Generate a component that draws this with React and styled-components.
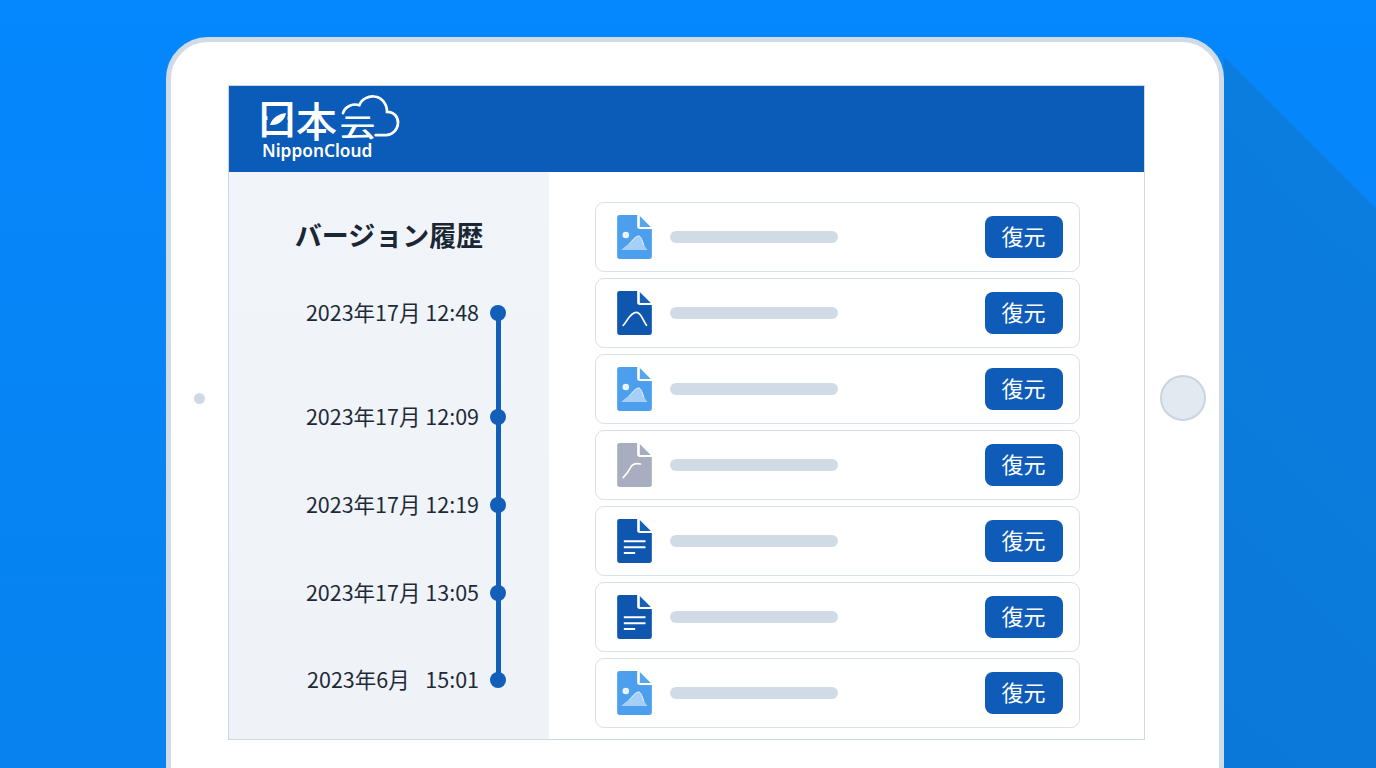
import React from "react";
import styled, { createGlobalStyle } from "styled-components";

const GlobalStyle = createGlobalStyle`
  html, body {
    margin: 0;
    padding: 0;
    overflow: hidden;
    font-family: "Noto Sans CJK JP", "Noto Sans", sans-serif;
  }
`;

const Stage = styled.div`
  width: 1376px;
  height: 768px;
  overflow: hidden;
  box-sizing: border-box;
  padding: 37px 152px 0 166px;
  background:
    linear-gradient(45deg, #0a78d8 0, #0b7ddf 503px, transparent 503px) right top / 152px 100% no-repeat,
    linear-gradient(180deg, #0587fd, #0782ee);
`;

const Tablet = styled.div`
  display: flex;
  width: 1058px;
  height: 770px;
  box-sizing: border-box;
  background: #fff;
  border: 5px solid #cfdbe6;
  border-radius: 42px;
  padding-top: 43px;
`;

const Bezel = styled.div`
  flex: none;
  width: ${({ $w }) => $w}px;
  height: 740px;
  display: flex;
  justify-content: center;
  align-items: center;
  box-sizing: border-box;
  padding-bottom: 114px;
`;

const Camera = styled.div`
  width: 11px;
  height: 11px;
  border-radius: 50%;
  background: #cfd9e4;
`;

const HomeButton = styled.div`
  width: 46px;
  height: 46px;
  margin-left: 2px;
  box-sizing: border-box;
  border-radius: 50%;
  background: #e3e9f1;
  border: 2px solid #c9d5e1;
`;

const Screen = styled.div`
  flex: none;
  width: 917px;
  height: 655px;
  box-sizing: border-box;
  border: 1.5px solid #cdd8e3;
  display: flex;
  flex-direction: column;
`;

const Header = styled.header`
  flex: none;
  height: 86px;
  background: #0b5bb8;
  box-sizing: border-box;
  padding: 10px 0 0 33px;
`;

const Logo = styled.div`
  position: relative;
  width: 140px;
  color: #fff;
`;

const LogoMark = styled.div`
  display: flex;
  align-items: flex-end;
  height: 44px;
  font-weight: 500;
`;

const Glyph = styled.span`
  display: block;
  flex: none;
  font-size: ${({ $size }) => $size}px;
  line-height: 1;
  margin-left: ${({ $ml }) => $ml}px;
  transform: translateY(${({ $dy }) => $dy}px) scale(${({ $sx }) => $sx}, ${({ $sy }) => $sy});
  transform-origin: center bottom;
`;

const LogoName = styled.div`
  font-family: "Noto Sans", sans-serif;
  font-size: 17.3px;
  font-weight: 600;
  line-height: 20px;
  margin-top: 1px;
`;

const LeafSvg = styled.svg`
  position: absolute;
  left: 0;
  top: 6px;
  width: 32px;
  height: 34px;
`;

const CloudSvg = styled.svg`
  position: absolute;
  left: 79px;
  top: -3px;
  width: 60px;
  height: 47px;
`;

const Body = styled.div`
  flex: 1;
  display: flex;
  min-height: 0;
`;

const Sidebar = styled.aside`
  flex: none;
  width: 320px;
  box-sizing: border-box;
  padding-top: 43px;
  background: linear-gradient(180deg, #f1f5f9, #eff3f8);
`;

const Title = styled.h1`
  margin: 0;
  font-size: 27px;
  line-height: 40px;
  font-weight: 700;
  text-align: center;
  color: #1b2735;
`;

const Timeline = styled.ol`
  position: relative;
  list-style: none;
  margin: 43px 0 0;
  padding: 0;

  &::before {
    content: "";
    position: absolute;
    top: 15px;
    bottom: 15px;
    right: 48.5px;
    width: 5px;
    background: #125fb9;
  }
`;

const TimeRow = styled.li`
  display: flex;
  align-items: center;
  justify-content: flex-end;
  gap: 11px;
  height: 30px;
  padding-right: 43px;
  margin-top: ${({ $gap }) => $gap}px;
`;

const TimeText = styled.span`
  font-size: 21.5px;
  line-height: 30px;
  margin-bottom: 3px;
  color: #1f2a38;
  white-space: pre;
`;

const Dot = styled.span`
  position: relative;
  flex: none;
  width: 16px;
  height: 16px;
  border-radius: 50%;
  background: #125fb9;
`;

const Main = styled.main`
  flex: 1;
  background: #fff;
  box-sizing: border-box;
  padding: 29.5px 0 0 46px;
  display: flex;
  flex-direction: column;
  gap: 6px;
`;

const FileRow = styled.div`
  width: 485px;
  height: 70px;
  flex: none;
  box-sizing: border-box;
  display: flex;
  align-items: center;
  padding: 0 16px 0 20.5px;
  background: #fff;
  border: 1.5px solid #d9e0e8;
  border-radius: 9px;
`;

const IconSvg = styled.svg`
  flex: none;
  width: 35px;
  height: 44px;
`;

const NameBar = styled.div`
  width: 168px;
  height: 12px;
  margin-left: 18px;
  border-radius: 6px;
  background: #d1dbe5;
`;

const RestoreButton = styled.button`
  margin-left: auto;
  width: 78px;
  height: 42px;
  border: 0;
  padding: 0 1px 3px 0;
  border-radius: 8px;
  background: #0f5cb8;
  color: #fff;
  font-family: inherit;
  font-size: 22px;
  font-weight: 400;
`;

const fileColors = {
  image: ["#4b9fec", "#56a6ee"],
  curve: ["#0f57ae", "#1660b8"],
  grey: ["#a8aebf", "#a8aebf"],
  doc: ["#0f57ae", "#1660b8"],
};

const FileIcon = ({ kind }) => {
  const [body, fold] = fileColors[kind];
  return (
    <IconSvg viewBox="0 0 104 132">
      <path
        d="M7 0H60V34a8 8 0 0 0 8 8H104V124a8 8 0 0 1-8 8H8a8 8 0 0 1-8-8V7a7 7 0 0 1 7-7Z"
        fill={body}
      />
      <path d="M68 3L101 36H68Z" fill={fold} />
      {kind === "image" && (
        <>
          <circle cx="26" cy="60" r="10" fill="#fff" fillOpacity="0.88" />
          <path
            d="M13 105C20 96 30 90 38 84C46 76 54 62 66 63C74 66 78 90 91 105Z"
            fill="#fff"
            fillOpacity="0.5"
          />
          <path
            d="M36 86C46 78 54 62 66 63C72 65 76 80 80 90"
            fill="none"
            stroke="#fff"
            strokeOpacity="0.8"
            strokeWidth="3"
          />
        </>
      )}
      {kind === "curve" && (
        <path
          d="M18 103C30 92 38 64 58 64C72 64 78 90 88 103"
          fill="none"
          stroke="#fff"
          strokeWidth="5"
          strokeLinecap="round"
        />
      )}
      {kind === "grey" && (
        <path
          d="M18 104C28 94 34 86 40 74C44 65 55 60 70 63"
          fill="none"
          stroke="#fff"
          strokeWidth="5"
          strokeLinecap="round"
        />
      )}
      {kind === "doc" && (
        <path
          d="M20 67H85M20 85H85M20 102H54"
          fill="none"
          stroke="#fff"
          strokeWidth="6"
        />
      )}
    </IconSvg>
  );
};

const times = [
  { label: "2023年17月 12:48", gap: 0 },
  { label: "2023年17月 12:09", gap: 74 },
  { label: "2023年17月 12:19", gap: 58 },
  { label: "2023年17月 13:05", gap: 58 },
  { label: "2023年6月\u2002 15:01", gap: 57 },
];

const files = ["image", "curve", "image", "grey", "doc", "doc", "image"];

export default function App() {
  return (
    <Stage>
      <GlobalStyle />
      <Tablet>
        <Bezel $w={57}>
          <Camera />
        </Bezel>
        <Screen>
          <Header>
            <Logo>
              <LogoMark>
                <Glyph $size={38} $ml={-4} $sx={1.18} $sy={1.08} $dy={-3}>日</Glyph>
                <Glyph $size={41} $ml={0} $sx={1} $sy={1} $dy={0}>本</Glyph>
                <Glyph $size={36} $ml={2.5} $sx={1} $sy={0.72} $dy={-2}>云</Glyph>
              </LogoMark>
              <LeafSvg viewBox="0 0 32 34">
                <rect x="5.5" y="13" width="20" height="8" fill="#0b5bb8" />
                <path d="M8 23C10 16 16 12 24 11C23 18 16 24 8 23Z" fill="#fff" />
              </LeafSvg>
              <CloudSvg viewBox="340 40 180 140">
                <path
                  d="M346 100C352 78 378 70 395 76C402 56 424 48 440 50C462 52 478 72 478 96C500 96 512 112 511 130C510 150 494 166 474 166H444"
                  fill="none"
                  stroke="#fff"
                  strokeWidth="8"
                  strokeLinecap="round"
                />
              </CloudSvg>
              <LogoName>NipponCloud</LogoName>
            </Logo>
          </Header>
          <Body>
            <Sidebar>
              <Title>バージョン履歴</Title>
              <Timeline>
                {times.map((t) => (
                  <TimeRow key={t.label} $gap={t.gap}>
                    <TimeText>{t.label}</TimeText>
                    <Dot />
                  </TimeRow>
                ))}
              </Timeline>
            </Sidebar>
            <Main>
              {files.map((kind, i) => (
                <FileRow key={i}>
                  <FileIcon kind={kind} />
                  <NameBar />
                  <RestoreButton>復元</RestoreButton>
                </FileRow>
              ))}
            </Main>
          </Body>
        </Screen>
        <Bezel $w={74}>
          <HomeButton />
        </Bezel>
      </Tablet>
    </Stage>
  );
}
